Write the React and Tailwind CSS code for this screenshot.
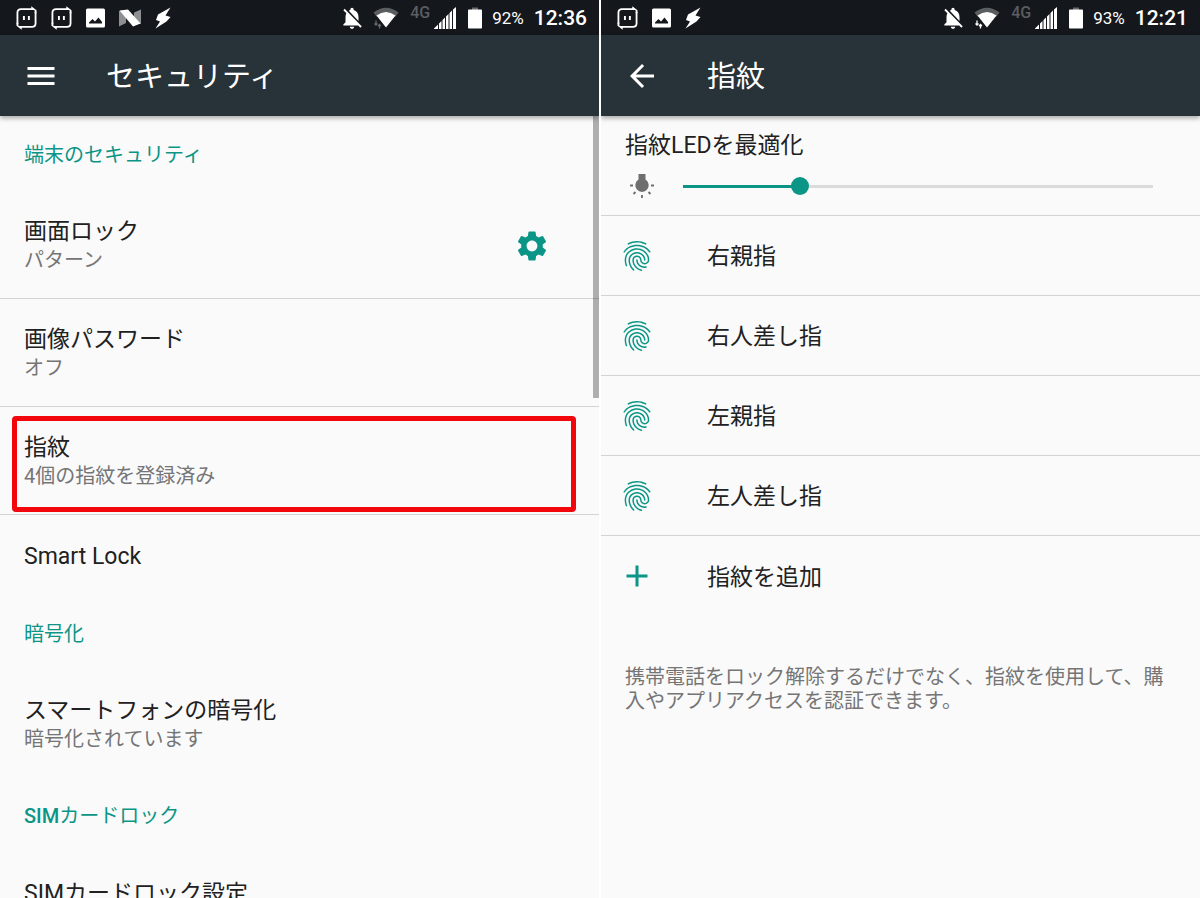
import React, { useState } from 'react'
import { MdMenu, MdArrowBack, MdSettings, MdFingerprint, MdAdd, MdNotificationsOff } from 'react-icons/md'

const RotateIcon = () => (
  <svg className="w-[21px] h-[26px]" viewBox="0 0 22 26" fill="none">
    <path d="M1.500 19V7.500Q1.500 3.700 5.300 3.700H18" stroke="#fff" strokeWidth="1.900" />
    <path d="M20.500 7V18.500Q20.500 22.300 16.700 22.300H4" stroke="#fff" strokeWidth="1.900" />
    <path d="M16 0.800L21.500 5V8H19.500V5L16 4Z" fill="#fff" />
    <path d="M6 25.200L0.500 21V18H2.500V21L6 22Z" fill="#fff" />
    <path d="M8.300 11V15M13.500 11V15" stroke="#fff" strokeWidth="2" />
  </svg>
)

const PhotoIcon = () => (
  <svg className="w-[19px] h-5" viewBox="0 0 19 20">
    <rect x="0" y="0.500" width="19" height="19" rx="1.500" fill="#fff" />
    <path d="M3 15.500V14.500L6.500 11L9 13.500L12.500 9.500L16 14V15.500Z" fill="#14171b" />
  </svg>
)

const NougatIcon = () => (
  <svg className="w-[22px] h-[18px]" viewBox="0 0 22 18">
    <path d="M0 2V17.500L7 14V2Z" fill="#8d8f92" />
    <path d="M22 0.500V15L15 12V3.500Z" fill="#8d8f92" />
    <path d="M0.500 1.500L9 0.500L21.500 14.500L14 17.500Z" fill="#fff" />
  </svg>
)

const BoltIcon = () => (
  <svg className="w-4 h-[22px]" viewBox="0 0 16 22">
    <path d="M15.500 0.500L10.500 8.500L15.500 10L11.500 14.500L0.500 21.500L5 14.500L1 13L3 7.500Z" fill="#fff" />
  </svg>
)

const WifiIcon = ({ active }) => (
  <svg className="w-[26px] h-6" viewBox="0 0 26 24">
    <path d="M0.500 6.500Q13 -3 25.500 6.500L22.500 10.500H3.500Z" fill="#5b5e61" />
    <path d="M3.500 9.500Q13 2.500 22.500 9.500L13 21.500Z" fill="#fff" />
    <path d="M3 14.500V19M1.500 17.500L3 19L4.500 17.500M6.500 22.500V18.500M5 20L6.500 18.500L8 20" stroke={active ? '#fff' : '#66696c'} strokeWidth="1.300" fill="none" />
  </svg>
)

const SignalIcon = () => (
  <svg className="w-[22px] h-[22px]" viewBox="0 0 22 22">
    <path d="M0 22V21.500L4 17.500V22ZM5 22V16.500L7.500 14V22ZM8.500 22V13L11 10.500V22ZM12 22V9.500L14.500 7V22ZM15.500 22V6L18 3.500V22ZM19 22V2.500L22 0V22Z" fill="#fff" />
  </svg>
)

const BatteryIcon = () => (
  <svg className="w-3.5 h-[22px]" viewBox="0 0 14 22">
    <path d="M4 0.500H10V3H4Z" fill="#66696c" />
    <rect x="0" y="2.500" width="14" height="19" rx="0.800" fill="#fff" />
  </svg>
)

const BulbIcon = () => (
  <svg className="w-[26px] h-[26px] shrink-0" viewBox="0 0 26 26">
    <path d="M9.500 1H16.500V6.500A6.700 6.700 0 1 1 9.500 6.500Z" fill="#6e6e6e" />
    <path d="M1 12.500H4M22 12.500H25M4.500 21L6.500 19M21.500 21L19.500 19M13 22V25" stroke="#6e6e6e" strokeWidth="1.800" />
  </svg>
)

const StatusBar = ({ children, battery, time, wifiActive }) => (
  <div className="flex h-[35px] shrink-0 items-center justify-between bg-[#14171b] pl-4 pr-3 text-white">
    <div className="flex items-center gap-3.5">{children}</div>
    <div className="flex items-center">
      <MdNotificationsOff className="mr-2 size-[26px]" />
      <WifiIcon active={wifiActive} />
      <span className="ml-[11px] mb-2.5 text-base leading-4 font-medium text-[#5b5e61]">4G</span>
      <span className="ml-1 mr-3"><SignalIcon /></span>
      <BatteryIcon />
      <span className="ml-2.5 pt-0.5 text-[17px]">{battery}</span>
      <span className="ml-2.5 pt-0.5 text-[21px] font-medium">{time}</span>
    </div>
  </div>
)

const AppBar = ({ title, label, icon }) => (
  <header className="relative z-10 flex h-[81px] shrink-0 items-center bg-[#283239] pl-[23px] text-white shadow-[0_2px_5px_rgba(0,0,0,0.35)]">
    <button type="button" aria-label={label} className="mr-[47px]">{icon}</button>
    <h1 className="pt-0.5 text-[29px] leading-9">{title}</h1>
  </header>
)

const SectionTitle = ({ children }) => (
  <h2 className="px-6 pt-[25px] pb-[21px] text-[20px] leading-[29px] text-[#0a9586]">{children}</h2>
)

const SettingRow = ({ title, summary, divider, highlight, action }) => (
  <li className={`relative flex min-h-20 items-center justify-between px-6 pt-[26px] pb-[23px] ${divider ? 'border-b border-[#d4d4d4]' : ''}`}>
    <div>
      <p className="text-[23px] leading-[29px] text-[#212121]">{title}</p>
      {summary && <p className="text-[20px] leading-[29px] text-[#757575]">{summary}</p>}
    </div>
    {action}
    {highlight && <div className="absolute top-[9px] right-[23px] bottom-[2px] left-3 rounded-sm border-5 border-[#f2050b]"></div>}
  </li>
)

const SecurityScreen = () => (
  <section className="flex min-w-0 flex-1 flex-col overflow-hidden bg-[#fafafa]">
    <StatusBar battery="92%" time="12:36">
      <RotateIcon />
      <RotateIcon />
      <PhotoIcon />
      <NougatIcon />
      <BoltIcon />
    </StatusBar>
    <AppBar title="セキュリティ" label="メニュー" icon={<MdMenu className="size-9" />} />

    <div className="relative min-h-0 flex-1 overflow-hidden">
      <SectionTitle>端末のセキュリティ</SectionTitle>
      <ul>
        <SettingRow
          title="画面ロック"
          summary="パターン"
          divider
          action={
            <button type="button" aria-label="画面ロックの設定" className="mr-[25px] text-[#0a9586]">
              <MdSettings className="size-9" />
            </button>
          }
        />
        <SettingRow title="画像パスワード" summary="オフ" divider />
        <SettingRow title="指紋" summary="4個の指紋を登録済み" divider highlight />
        <SettingRow title="Smart Lock" />
      </ul>
      <SectionTitle>暗号化</SectionTitle>
      <ul>
        <SettingRow title="スマートフォンの暗号化" summary="暗号化されています" />
      </ul>
      <SectionTitle><span className="font-medium">SIM</span>カードロック</SectionTitle>
      <ul>
        <SettingRow title="SIMカードロック設定" />
      </ul>

      {/* Scrollbar */}
      <div className="absolute top-0 right-0 h-[36%] w-1.5 bg-black/30"></div>
    </div>
  </section>
)

const fingers = ['右親指', '右人差し指', '左親指', '左人差し指']

const FingerprintScreen = () => {
  const [level, setLevel] = useState(24)

  return (
    <section className="flex min-w-0 flex-1 flex-col overflow-hidden bg-[#fafafa]">
      <StatusBar battery="93%" time="12:21" wifiActive>
        <RotateIcon />
        <PhotoIcon />
        <BoltIcon />
      </StatusBar>
      <AppBar title="指紋" label="戻る" icon={<MdArrowBack className="size-9" />} />

      <div className="border-b border-[#d4d4d4] px-6 pt-[15px] pb-4">
        <label htmlFor="led" className="block text-[23px] leading-[29px] text-[#212121]">指紋LEDを最適化</label>
        <div className="mt-[13px] flex items-center pl-1">
          <BulbIcon />
          <input
            id="led"
            type="range"
            value={level}
            onChange={(e) => setLevel(Number(e.target.value))}
            className="ml-7 mr-[23px] h-[3px] min-w-0 flex-1 appearance-none [&::-webkit-slider-thumb]:size-[18px] [&::-webkit-slider-thumb]:appearance-none [&::-webkit-slider-thumb]:rounded-full [&::-webkit-slider-thumb]:bg-[#0a9586]"
            style={{ background: `linear-gradient(to right, #0a9586 ${level}%, #dbdbdb ${level}%)` }}
          />
        </div>
      </div>

      <ul>
        {fingers.map((finger) => (
          <li key={finger} className="flex h-20 items-center border-b border-[#d4d4d4] pl-[18px]">
            <MdFingerprint className="mr-[52px] size-9 text-[#0a9586]" />
            <span className="pt-0.5 text-[23px] leading-[29px] text-[#212121]">{finger}</span>
          </li>
        ))}
      </ul>
      <button type="button" className="flex h-20 items-center pl-[18px] text-left">
        <MdAdd className="mr-[52px] size-9 text-[#0a9586]" />
        <span className="pt-0.5 text-[23px] leading-[29px] text-[#212121]">指紋を追加</span>
      </button>

      <p className="mt-[49px] pl-6 pr-5 text-[20px] leading-6 text-[#757575]">
        携帯電話をロック解除するだけでなく、指紋を使用して、購入やアプリアクセスを認証できます。
      </p>
    </section>
  )
}

const App = () => {
  return (
    <main lang="ja" className="flex h-screen gap-0.5 overflow-hidden bg-white font-[Roboto,'Noto_Sans_CJK_JP',sans-serif]">
      <SecurityScreen />
      <FingerprintScreen />
    </main>
  )
}

export default App
